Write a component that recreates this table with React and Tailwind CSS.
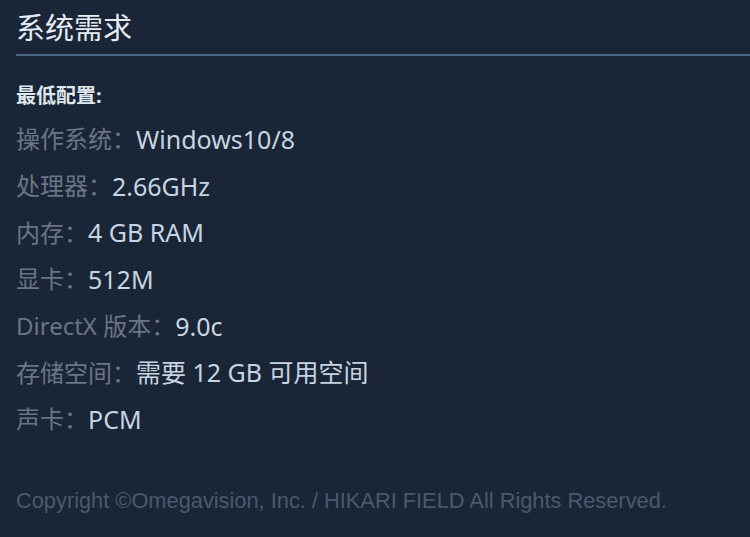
const rows = [
  ["操作系统：", "Windows10/8"],
  ["处理器：", "2.66GHz"],
  ["内存：", "4 GB RAM"],
  ["显卡：", "512M"],
  ["DirectX 版本：", "9.0c"],
  ["存储空间：", "需要 12 GB 可用空间"],
  ["声卡：", "PCM"],
];

export default function App() {
  return (
    <main className="h-[537px] w-[750px] overflow-hidden bg-[#1a2537] pl-4 font-['Noto_Sans','Noto_Sans_CJK_SC',sans-serif]">
      <h2 className="pt-[8px] text-[29px] leading-[40px] text-[#e4ecf2]">系统需求</h2>
      <div className="mt-[6px] h-[2px] bg-[#4b6883]" />
      <p className="mt-[28px] text-[20px] font-bold leading-[24px] text-[#dfe6ec]">最低配置:</p>
      <ul className="mt-[8px] flex flex-col">
        {rows.map(([label, value]) => (
          <li key={label} className="flex h-[46.7px] items-center leading-none">
            <span className="text-[24px] text-[#6b7684]">{label}</span>
            <span className="text-[25px] text-[#c7d5e0]">{value}</span>
          </li>
        ))}
      </ul>
      <p className="mt-[45px] font-['Liberation_Sans',sans-serif] text-[21.8px] leading-[26px] text-[#4a5a6c]">
        Copyright ©Omegavision, Inc. / HIKARI FIELD All Rights Reserved.
      </p>
    </main>
  );
}
